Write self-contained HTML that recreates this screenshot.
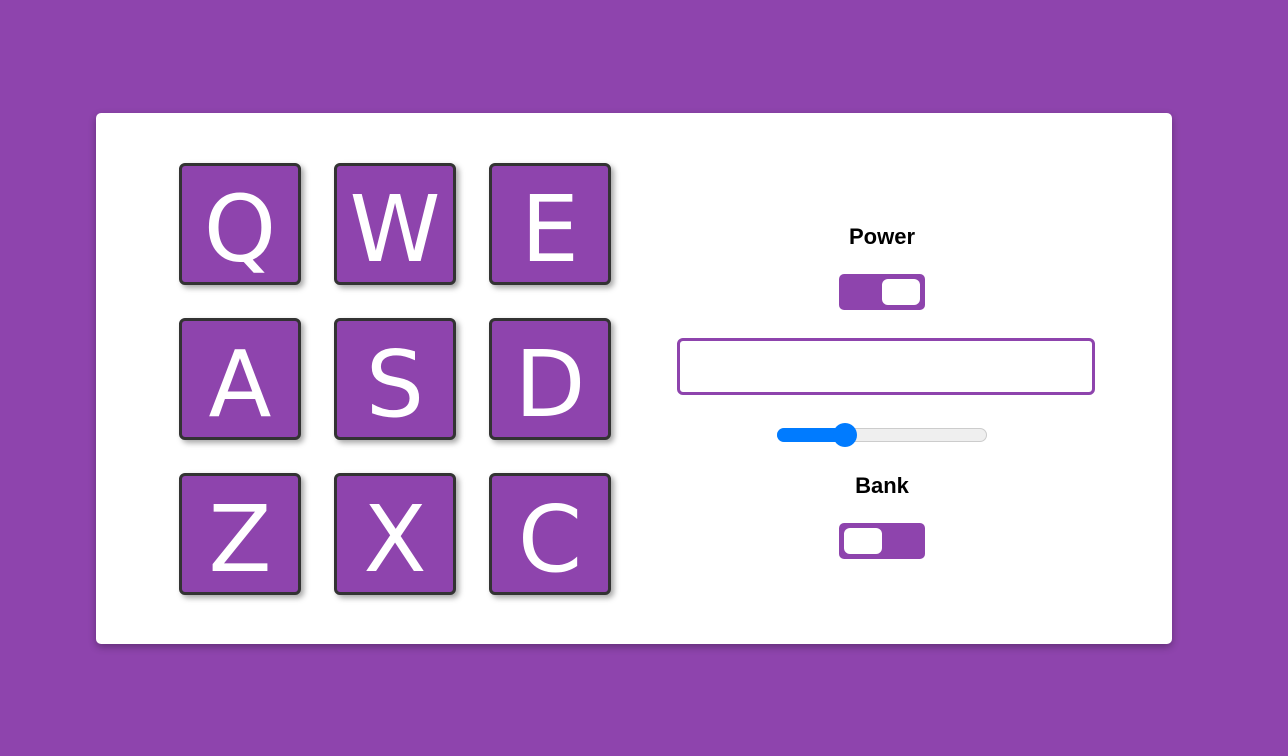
<!DOCTYPE html>
<html><head><style>
body{margin:0;width:1288px;height:756px;background:#8e44ad;position:relative;overflow:hidden;font-family:"Liberation Sans",sans-serif}
.card{position:absolute;left:96px;top:113px;width:1076px;height:531px;background:#fff;border-radius:5px;box-shadow:0 3px 8px rgba(0,0,0,.3)}
.pad{position:absolute;width:116px;height:116px;background:#8e44ad;border:3px solid #333;border-radius:6px;box-shadow:3px 3px 6px rgba(0,0,0,.35);color:#fff;font-size:100px;line-height:128px;text-align:center;font-family:"DejaVu Sans",sans-serif;font-size:92px}
.lbl{position:absolute;left:782px;width:200px;text-align:center;font-weight:bold;font-size:22px;color:#000}
.tg{position:absolute;left:839px;width:86px;height:36px;background:#8e44ad;border-radius:5px}
.kn{position:absolute;top:5px;width:38px;height:26px;background:#fff;border-radius:6px}
</style></head><body>
<div class="card"></div>
<div class="pad" style="left:179px;top:163px">Q</div>
<div class="pad" style="left:334px;top:163px">W</div>
<div class="pad" style="left:489px;top:163px">E</div>
<div class="pad" style="left:179px;top:318px">A</div>
<div class="pad" style="left:334px;top:318px">S</div>
<div class="pad" style="left:489px;top:318px">D</div>
<div class="pad" style="left:179px;top:473px">Z</div>
<div class="pad" style="left:334px;top:473px">X</div>
<div class="pad" style="left:489px;top:473px">C</div>
<div class="lbl" style="top:224px">Power</div>
<div class="tg" style="top:274px"><div class="kn" style="left:43px"></div></div>
<div style="position:absolute;left:677px;top:338px;width:412px;height:51px;border:3px solid #8e44ad;border-radius:6px;background:#fff"></div>
<div style="position:absolute;left:777px;top:428px;width:208px;height:12px;background:#efefef;border:1px solid #ccc;border-radius:7px"></div>
<div style="position:absolute;left:777px;top:428px;width:70px;height:14px;background:#007bff;border-radius:7px"></div>
<div style="position:absolute;left:833px;top:423px;width:24px;height:24px;background:#007bff;border-radius:50%"></div>
<div class="lbl" style="top:473px">Bank</div>
<div class="tg" style="top:523px"><div class="kn" style="left:5px"></div></div>
</body></html>
